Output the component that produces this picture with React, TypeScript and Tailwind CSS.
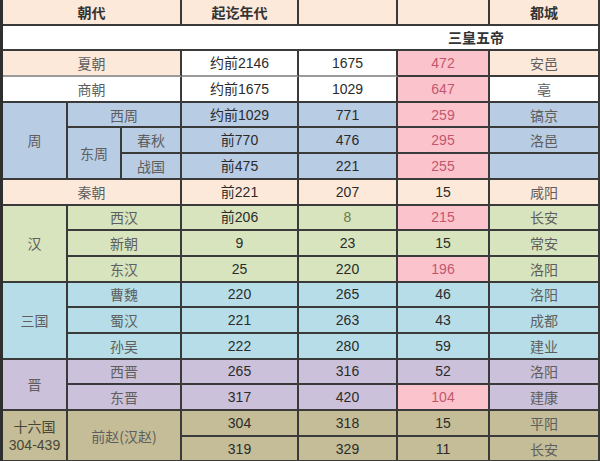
const zh = "font-['Noto_Sans_CJK_SC',sans-serif]";
const num = "font-['Liberation_Sans','Noto_Sans_CJK_SC',sans-serif]";

const base =
  'flex items-center justify-center border-r-2 border-b-2 border-[#3a3a3a] text-[14px] leading-none';

// background tones (Excel-ish palette)
const peach = 'bg-[#fde9d9]';
const white = 'bg-white';
const pink = 'bg-[#fbc4cd]';
const blue = 'bg-[#b8cce4]';
const green = 'bg-[#d7e4bd]';
const aqua = 'bg-[#b7dee8]';
const purple = 'bg-[#ccc1da]';
const tan = 'bg-[#c4bd97]';

function Name({ className = '', children }: { className?: string; children?: React.ReactNode }) {
  return <div className={`${base} ${zh} text-[#5e5e5e] ${className}`}>{children}</div>;
}

function Num({ className = '', children }: { className?: string; children?: React.ReactNode }) {
  return <div className={`${base} ${num} text-[#2b2b2b] ${className}`}>{children}</div>;
}

function Red({ children }: { children?: React.ReactNode }) {
  return <div className={`${base} ${num} ${pink} text-[#c4566c]`}>{children}</div>;
}

export default function App() {
  return (
    <div className="h-[461px] w-[600px] overflow-hidden bg-white">
      <div className="grid grid-cols-[65px_54px_60px_117px_99px_92px_110px] grid-rows-[repeat(18,25.7px)] border-l-[3px] border-[#2f2f2f]">
        {/* header */}
        <div className={`${base} ${zh} ${peach} col-span-3 font-bold text-[#333]`}>朝代</div>
        <div className={`${base} ${zh} ${peach} font-bold text-[#333]`}>起讫年代</div>
        <div className={`${base} ${peach}`} />
        <div className={`${base} ${peach}`} />
        <div className={`${base} ${zh} ${peach} font-bold text-[#333]`}>都城</div>

        {/* 三皇五帝 */}
        <div className={`col-span-7 flex items-center border-r-2 border-b-2 border-[#3a3a3a] bg-white pl-[445px] text-[14px] font-bold text-[#333] ${zh}`}>
          三皇五帝
        </div>

        {/* 夏 */}
        <Name className={`${peach} col-span-3 border-b-[#9a9a9a] border-b`}>夏朝</Name>
        <Num className={`${white} border-b border-b-[#9a9a9a]`}>约前2146</Num>
        <Num className={`${white} border-b border-b-[#9a9a9a]`}>1675</Num>
        <Red>472</Red>
        <Name className={peach}>安邑</Name>

        {/* 商 */}
        <Name className={`${white} col-span-3`}>商朝</Name>
        <Num className={white}>约前1675</Num>
        <Num className={white}>1029</Num>
        <Red>647</Red>
        <Name className={white}>亳</Name>

        {/* 周 */}
        <Name className={`${blue} row-span-3`}>周</Name>
        <Name className={`${blue} col-span-2`}>西周</Name>
        <Num className={blue}>约前1029</Num>
        <Num className={blue}>771</Num>
        <Red>259</Red>
        <Name className={blue}>镐京</Name>

        <Name className={`${blue} row-span-2`}>东周</Name>
        <Name className={blue}>春秋</Name>
        <Num className={blue}>前770</Num>
        <Num className={blue}>476</Num>
        <Red>295</Red>
        <Name className={blue}>洛邑</Name>

        <Name className={blue}>战国</Name>
        <Num className={blue}>前475</Num>
        <Num className={blue}>221</Num>
        <Red>255</Red>
        <Name className={blue} />

        {/* 秦 */}
        <Name className={`${peach} col-span-3`}>秦朝</Name>
        <Num className={peach}>前221</Num>
        <Num className={peach}>207</Num>
        <Num className={peach}>15</Num>
        <Name className={peach}>咸阳</Name>

        {/* 汉 */}
        <Name className={`${green} row-span-3`}>汉</Name>
        <Name className={`${green} col-span-2`}>西汉</Name>
        <Num className={green}>前206</Num>
        <Num className={`${green} text-[#6b7a4a]`}>8</Num>
        <Red>215</Red>
        <Name className={green}>长安</Name>

        <Name className={`${green} col-span-2`}>新朝</Name>
        <Num className={green}>9</Num>
        <Num className={green}>23</Num>
        <Num className={green}>15</Num>
        <Name className={green}>常安</Name>

        <Name className={`${green} col-span-2`}>东汉</Name>
        <Num className={green}>25</Num>
        <Num className={green}>220</Num>
        <Red>196</Red>
        <Name className={green}>洛阳</Name>

        {/* 三国 */}
        <Name className={`${aqua} row-span-3`}>三国</Name>
        <Name className={`${aqua} col-span-2`}>曹魏</Name>
        <Num className={aqua}>220</Num>
        <Num className={aqua}>265</Num>
        <Num className={aqua}>46</Num>
        <Name className={aqua}>洛阳</Name>

        <Name className={`${aqua} col-span-2`}>蜀汉</Name>
        <Num className={aqua}>221</Num>
        <Num className={aqua}>263</Num>
        <Num className={aqua}>43</Num>
        <Name className={aqua}>成都</Name>

        <Name className={`${aqua} col-span-2`}>孙吴</Name>
        <Num className={aqua}>222</Num>
        <Num className={aqua}>280</Num>
        <Num className={aqua}>59</Num>
        <Name className={aqua}>建业</Name>

        {/* 晋 */}
        <Name className={`${purple} row-span-2`}>晋</Name>
        <Name className={`${purple} col-span-2`}>西晋</Name>
        <Num className={purple}>265</Num>
        <Num className={purple}>316</Num>
        <Num className={purple}>52</Num>
        <Name className={purple}>洛阳</Name>

        <Name className={`${purple} col-span-2`}>东晋</Name>
        <Num className={purple}>317</Num>
        <Num className={purple}>420</Num>
        <Red>104</Red>
        <Name className={purple}>建康</Name>

        {/* 十六国 */}
        <div className={`${base} ${tan} row-span-2 flex-col gap-[5px] text-[#4a4636]`}>
          <span className={zh}>十六国</span>
          <span className={num}>304-439</span>
        </div>
        <Name className={`${tan} col-span-2 row-span-2 text-[#4a4636]`}>前赵(汉赵)</Name>
        <Num className={tan}>304</Num>
        <Num className={tan}>318</Num>
        <Num className={tan}>15</Num>
        <Name className={`${tan} text-[#4a4636]`}>平阳</Name>

        <Num className={tan}>319</Num>
        <Num className={tan}>329</Num>
        <Num className={tan}>11</Num>
        <Name className={`${tan} text-[#4a4636]`}>长安</Name>
      </div>
    </div>
  );
}
